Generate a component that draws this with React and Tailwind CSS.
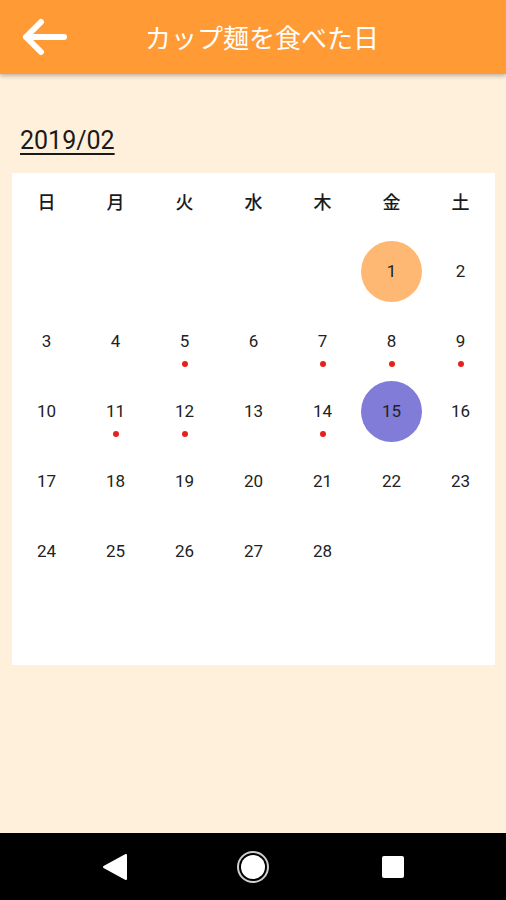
import React from "react";

const days = [
  [null, null, null, null, null, 1, 2],
  [3, 4, 5, 6, 7, 8, 9],
  [10, 11, 12, 13, 14, 15, 16],
  [17, 18, 19, 20, 21, 22, 23],
  [24, 25, 26, 27, 28, null, null],
  [null, null, null, null, null, null, null],
];
const dots = new Set([5, 7, 8, 9, 11, 12, 14]);
const week = ["日", "月", "火", "水", "木", "金", "土"];

export default function App() {
  return (
    <div
      className="w-[506px] h-[900px] flex flex-col bg-[#FFF0DB] overflow-hidden"
      style={{ fontFamily: "Roboto, 'Noto Sans CJK JP', sans-serif" }}
    >
      <header className="h-[74px] shrink-0 bg-[#FF9A35] flex items-center shadow-[0_2px_4px_rgba(0,0,0,0.25)] relative z-10">
        <div className="w-[88px] flex items-center pl-[22px]">
          <svg width="46" height="38" viewBox="0 0 46 38" fill="none">
            <path d="M4 19H42M19 4L4 19L19 34" stroke="white" strokeWidth="6" strokeLinecap="round" strokeLinejoin="round" />
          </svg>
        </div>
        <h1
          className="ml-[57px] text-white text-[26px] leading-none"
          style={{ fontFamily: "'Noto Sans CJK JP', sans-serif" }}
        >
          カップ麺を食べた日
        </h1>
      </header>
      <main className="flex-1 flex flex-col">
        <div className="pt-[54px] pl-[20px] h-[99px]">
          <span className="text-[25px] leading-none text-[#1a1a1a] underline underline-offset-[4px] decoration-[1.5px]">
            2019/02
          </span>
        </div>
        <div className="mx-[12px] w-[483px] h-[492px] bg-white flex flex-col">
          <div className="grid grid-cols-7 h-[63px] items-center">
            {week.map((w) => (
              <div
                key={w}
                className="text-center text-[18px] font-medium text-[#1a1a1a] leading-none pb-[8px]"
                style={{ fontFamily: "'Noto Sans CJK JP', sans-serif" }}
              >
                {w}
              </div>
            ))}
          </div>
          {days.map((row, i) => (
            <div key={i} className="grid grid-cols-7 h-[70px]">
              {row.map((d, j) => (
                <div key={j} className="relative flex items-center justify-center">
                  {d === 1 && <div className="absolute w-[61px] h-[61px] rounded-full bg-[#FFB874]" />}
                  {d === 15 && <div className="absolute w-[61px] h-[61px] rounded-full bg-[#807CD7]" />}
                  {d && (
                    <span className="relative text-[17px] leading-none text-[#222]">{d}</span>
                  )}
                  {d && dots.has(d) && (
                    <div className="absolute top-[55px] w-[6px] h-[6px] rounded-full bg-[#E8201C]" />
                  )}
                </div>
              ))}
            </div>
          ))}
        </div>
      </main>
      <nav className="h-[67px] shrink-0 bg-black flex items-center justify-center relative">
        <div className="w-[138px] flex justify-center">
          <svg width="26" height="28" viewBox="0 0 26 28">
            <path d="M24 2 L24 26 L2 14 Z" fill="white" stroke="white" strokeWidth="2" strokeLinejoin="round" />
          </svg>
        </div>
        <div className="w-[138px] flex justify-center">
          <svg width="34" height="34" viewBox="0 0 34 34">
            <circle cx="17" cy="17" r="15" fill="none" stroke="#cfcfcf" strokeWidth="2" />
            <circle cx="17" cy="17" r="12" fill="white" />
          </svg>
        </div>
        <div className="w-[138px] flex justify-center pl-[4px]">
          <div className="w-[22px] h-[22px] bg-white rounded-[2px]" />
        </div>
      </nav>
    </div>
  );
}
